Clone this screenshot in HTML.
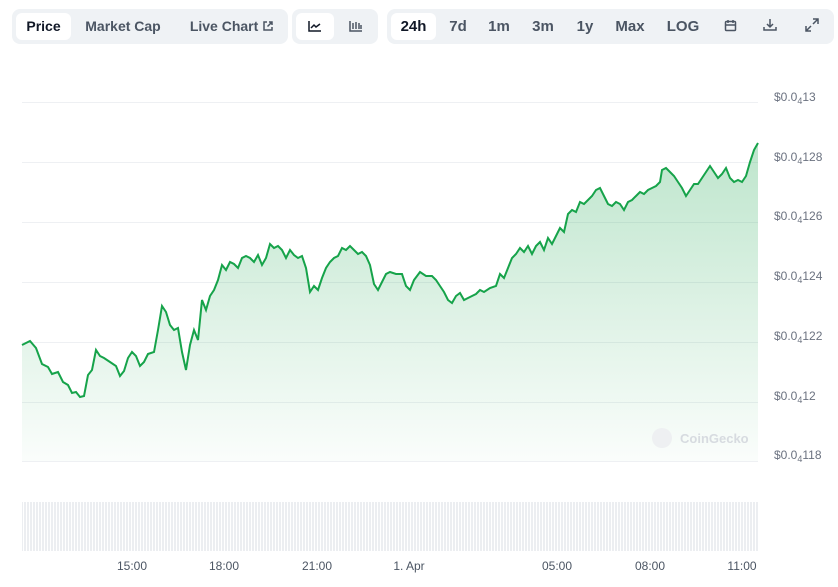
<!DOCTYPE html>
<html><head><style>
body{margin:0;width:838px;height:587px;background:#fff;font-family:"Liberation Sans",sans-serif;position:relative;overflow:hidden}
.g{position:absolute;top:9px;height:35px;background:#eff2f5;border-radius:8px}
.b{position:absolute;top:4px;height:27px;line-height:27px;font-size:14px;font-weight:bold;color:#4b5563;text-align:center}
.w{background:#fff;border-radius:6px;color:#111827}
.yl{position:absolute;left:774px;font-size:12px;color:#6b7280}
.yl sub{font-size:9px;vertical-align:-3px}
.xl{position:absolute;top:559px;font-size:12px;color:#4b5563;transform:translateX(-50%)}
</style></head><body>
<div class="g" style="left:12px;width:276px">
<div class="b w" style="left:4px;width:55px">Price</div>
<div class="b" style="left:66px;width:90px">Market Cap</div>
<div class="b" style="left:170px;width:100px">Live Chart <svg width="12" height="12" viewBox="0 0 12 12" style="vertical-align:-1px"><path d="M5 2H2v8h8V7M7 2h3v3M10 2L5.5 6.5" fill="none" stroke="#4b5563" stroke-width="1.5"/></svg></div>
</div>
<div class="g" style="left:292px;width:86px">
<div class="b w" style="left:4px;width:38px"><svg width="14" height="12" viewBox="0 0 14 12" style="vertical-align:-1px"><path d="M1 1v10h12M3 8l3-3 2 2 4-3" fill="none" stroke="#111827" stroke-width="1.5"/></svg></div>
<div class="b" style="left:46px;width:36px"><svg width="14" height="12" viewBox="0 0 14 12" style="vertical-align:-1px"><path d="M1 1v10h12M4 3v6M7 2v7M10 3v6M12 5v4" fill="none" stroke="#4b5563" stroke-width="1.5"/></svg></div>
</div>
<div class="g" style="left:387px;width:447px">
<div class="b w" style="left:4px;width:45px;font-size:15px">24h</div>
<div class="b" style="left:55px;width:32px;font-size:15px">7d</div>
<div class="b" style="left:96px;width:32px;font-size:15px">1m</div>
<div class="b" style="left:140px;width:32px;font-size:15px">3m</div>
<div class="b" style="left:182px;width:32px;font-size:15px">1y</div>
<div class="b" style="left:223px;width:40px;font-size:15px">Max</div>
<div class="b" style="left:275px;width:42px;font-size:15px">LOG</div>
<div class="b" style="left:328px;width:30px"><svg width="13" height="13" viewBox="0 0 13 13" style="vertical-align:-1px"><rect x="1.5" y="2.5" width="10" height="9" rx="1" fill="none" stroke="#4b5563" stroke-width="1.5"/><path d="M1.5 6h10M4 1v3M9 1v3" stroke="#4b5563" stroke-width="1.5"/></svg></div>
<div class="b" style="left:368px;width:30px"><svg width="14" height="14" viewBox="0 0 14 14" style="vertical-align:-1px"><path d="M7 1v8M4 6l3 3 3-3M1 9v3h12V9" fill="none" stroke="#4b5563" stroke-width="1.5"/></svg></div>
<div class="b" style="left:410px;width:30px"><svg width="14" height="14" viewBox="0 0 14 14" style="vertical-align:-1px"><path d="M8 1h5v5M13 1L8 6M6 13H1V8M1 13l5-5" fill="none" stroke="#4b5563" stroke-width="1.5"/></svg></div>
</div>
<svg width="838" height="587" style="position:absolute;left:0;top:0">
<defs><linearGradient id="f" x1="0" y1="0" x2="0" y2="1"><stop offset="0" stop-color="#16a34a" stop-opacity=".28"/><stop offset="1" stop-color="#16a34a" stop-opacity=".02"/></linearGradient>
<pattern id="v" width="3" height="60" patternUnits="userSpaceOnUse"><rect width="2" height="60" fill="#eceef1"/></pattern></defs>
<g stroke="#eef0f3" stroke-width="1"><path d="M22 102.5H758M22 162.5H758M22 222.5H758M22 282.5H758M22 342.5H758M22 402.5H758M22 461.5H758"/></g>
<path d="M22 345L30 341L36 348L42 364L48 367L52 374L58 372L63 382L68 385L72 393L76 392L80 397L84 396L88 375L92 370L96 350L100 356L104 358L110 362L116 366L120 376L124 371L128 358L132 352L136 356L140 366L144 362L148 354L154 352L158 330L162 306L166 312L170 325L174 330L178 328L182 352L186 370L190 345L194 330L198 340L202 300L206 310L210 296L214 290L218 280L222 265L226 270L230 262L234 264L238 268L242 258L246 256L250 258L254 262L258 255L262 265L266 258L270 244L274 248L278 246L282 250L286 258L290 250L294 255L298 258L302 256L306 268L310 292L314 286L318 290L322 278L326 268L330 262L334 258L338 256L342 248L346 250L350 246L354 250L358 254L362 252L366 256L370 265L374 284L378 290L382 282L386 274L390 272L396 274L402 274L406 286L410 290L414 280L420 272L426 276L432 276L436 280L440 286L444 292L448 300L452 303L456 296L460 293L464 300L468 298L472 296L476 294L480 290L484 292L490 288L496 286L500 274L504 278L508 268L512 258L516 254L520 248L524 252L528 246L532 254L536 246L540 242L544 250L548 238L552 244L556 236L560 228L564 232L568 214L572 210L576 212L580 202L584 204L588 200L592 196L596 190L600 188L604 196L608 204L612 206L616 202L620 204L624 210L628 202L632 200L636 196L640 192L644 194L648 190L652 188L656 186L660 182L662 170L666 168L670 172L674 176L678 182L682 188L686 196L690 190L694 184L698 184L702 178L706 172L710 166L714 172L718 178L722 174L726 168L730 178L734 182L738 180L742 182L746 176L750 162L754 150L758 143L758 461L22 461Z" fill="url(#f)"/>
<path d="M22 345L30 341L36 348L42 364L48 367L52 374L58 372L63 382L68 385L72 393L76 392L80 397L84 396L88 375L92 370L96 350L100 356L104 358L110 362L116 366L120 376L124 371L128 358L132 352L136 356L140 366L144 362L148 354L154 352L158 330L162 306L166 312L170 325L174 330L178 328L182 352L186 370L190 345L194 330L198 340L202 300L206 310L210 296L214 290L218 280L222 265L226 270L230 262L234 264L238 268L242 258L246 256L250 258L254 262L258 255L262 265L266 258L270 244L274 248L278 246L282 250L286 258L290 250L294 255L298 258L302 256L306 268L310 292L314 286L318 290L322 278L326 268L330 262L334 258L338 256L342 248L346 250L350 246L354 250L358 254L362 252L366 256L370 265L374 284L378 290L382 282L386 274L390 272L396 274L402 274L406 286L410 290L414 280L420 272L426 276L432 276L436 280L440 286L444 292L448 300L452 303L456 296L460 293L464 300L468 298L472 296L476 294L480 290L484 292L490 288L496 286L500 274L504 278L508 268L512 258L516 254L520 248L524 252L528 246L532 254L536 246L540 242L544 250L548 238L552 244L556 236L560 228L564 232L568 214L572 210L576 212L580 202L584 204L588 200L592 196L596 190L600 188L604 196L608 204L612 206L616 202L620 204L624 210L628 202L632 200L636 196L640 192L644 194L648 190L652 188L656 186L660 182L662 170L666 168L670 172L674 176L678 182L682 188L686 196L690 190L694 184L698 184L702 178L706 172L710 166L714 172L718 178L722 174L726 168L730 178L734 182L738 180L742 182L746 176L750 162L754 150L758 143" fill="none" stroke="#16a34a" stroke-width="2"/>
<rect x="22" y="502" width="736" height="49" fill="url(#v)"/>
<circle cx="662" cy="438" r="10" fill="#eef0f2"/>
<text x="680" y="443" font-family="Liberation Sans" font-size="13" font-weight="bold" fill="#d7dbe0">CoinGecko</text>
</svg>
<div class="yl" style="top:90px">$0.0<sub>4</sub>13</div>
<div class="yl" style="top:150px">$0.0<sub>4</sub>128</div>
<div class="yl" style="top:209px">$0.0<sub>4</sub>126</div>
<div class="yl" style="top:269px">$0.0<sub>4</sub>124</div>
<div class="yl" style="top:329px">$0.0<sub>4</sub>122</div>
<div class="yl" style="top:389px">$0.0<sub>4</sub>12</div>
<div class="yl" style="top:448px">$0.0<sub>4</sub>118</div>
<div class="xl" style="left:132px">15:00</div>
<div class="xl" style="left:224px">18:00</div>
<div class="xl" style="left:317px">21:00</div>
<div class="xl" style="left:409px">1. Apr</div>
<div class="xl" style="left:557px">05:00</div>
<div class="xl" style="left:650px">08:00</div>
<div class="xl" style="left:742px">11:00</div>
</body></html>
